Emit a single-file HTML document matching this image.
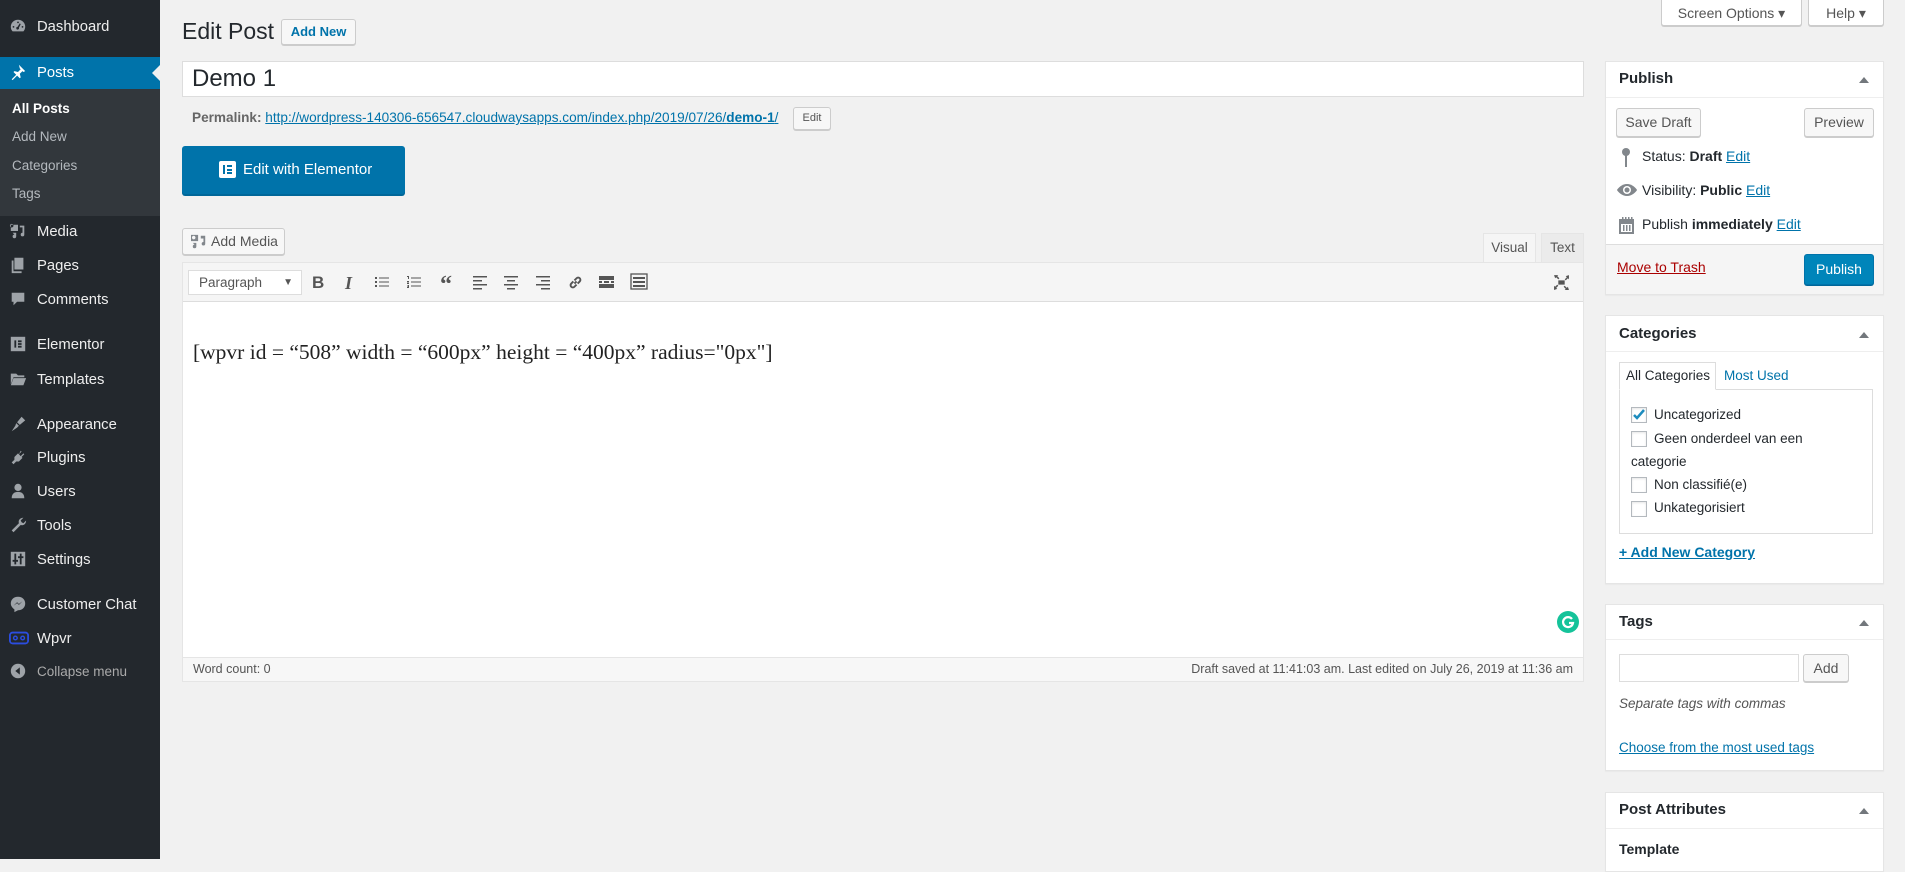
<!DOCTYPE html>
<html><head><meta charset="utf-8"><style>
*{box-sizing:border-box;margin:0;padding:0}
body{width:1905px;height:859px;background:#f1f1f1;font-family:"Liberation Sans",sans-serif;color:#23282d;position:relative;overflow:hidden;font-size:14px}
.a{position:absolute}
#sb{left:0;top:0;width:160px;height:859px;background:#23282d}
.mi{position:absolute;left:0;width:160px;color:#eee;font-size:14.8px;padding-left:37px;line-height:20px}
.mi svg{position:absolute;left:9px;top:0}
.sub{position:absolute;left:12px;color:#b4b9be;font-size:13.5px}
.btn{position:absolute;background:#f7f7f7;border:1px solid #ccc;border-radius:3px;box-shadow:0 1px 0 #ccc;color:#555;font-size:14px;text-align:center}
.box{position:absolute;left:1605px;width:279px;background:#fff;border:1px solid #e5e5e5;box-shadow:0 1px 1px rgba(0,0,0,.04)}
.bh{position:absolute;left:0;right:0;top:0;border-bottom:1px solid #eee;font-weight:bold;font-size:15px;padding-left:13px}
.tri{position:absolute;right:14px;width:0;height:0;border-left:5px solid transparent;border-right:5px solid transparent;border-bottom:6px solid #72777c}
a,.lk{color:#0073aa;text-decoration:underline}
.cb{position:absolute;width:16px;height:16px;border:1px solid #b4b9be;background:#fff;box-shadow:inset 0 1px 2px rgba(0,0,0,.1)}
.ti{position:absolute;top:273px;color:#555}
</style></head><body>
<div id="sb" class="a">
 <div class="a" style="left:0;top:57px;width:160px;height:32px;background:#0073aa"></div>
 <div class="a" style="left:152px;top:65px;border-top:8px solid transparent;border-bottom:8px solid transparent;border-right:8px solid #f1f1f1"></div>
 <div class="a" style="left:0;top:89px;width:160px;height:127px;background:#32373c"></div>
 <div class="mi" style="top:17px"><svg width="18" height="18" viewBox="0 0 20 20"><path fill="#9ea3a8" d="M10 3a8 8 0 0 0-8 8c0 2 .7 3.6 2 5h12a8 8 0 0 0 2-5 8 8 0 0 0-8-8zm0 2a1 1 0 1 1 0 2 1 1 0 0 1 0-2zM5 10a1 1 0 1 1 0 2 1 1 0 0 1 0-2zm10 0a1 1 0 1 1 0 2 1 1 0 0 1 0-2zm-3-3l1 1-2 4a1.5 1.5 0 1 1-1.5-1z"/></svg>Dashboard</div>
 <div class="mi" style="top:63px;color:#fff"><svg width="18" height="18" viewBox="0 0 20 20"><path fill="#fff" d="M11 2l7 7-2 1-1-1-3 3 1 4-1 1-3-3-5 5-1-1 5-5-3-3 1-1 4 1 3-3-1-1z"/></svg>Posts</div>
 <div class="sub" style="top:101px;color:#fff;font-weight:bold">All Posts</div>
 <div class="sub" style="top:129px">Add New</div>
 <div class="sub" style="top:158px">Categories</div>
 <div class="sub" style="top:186px">Tags</div>
 <div class="mi" style="top:222px"><svg width="18" height="18" viewBox="0 0 20 20"><path fill="#9ea3a8" d="M2 3h8v7H2zm3 1a2 2 0 1 0 0 .1zM12 4h5v10a2 2 0 1 1-2-2V6h-3zM4 12h4v4a2 2 0 1 1-2-2z"/></svg>Media</div>
 <div class="mi" style="top:256px"><svg width="18" height="18" viewBox="0 0 20 20"><path fill="#9ea3a8" d="M6 2h10v13H6zM3 5h2v12h9v2H3z"/></svg>Pages</div>
 <div class="mi" style="top:290px"><svg width="18" height="18" viewBox="0 0 20 20"><path fill="#9ea3a8" d="M3 3h14v10h-8l-4 4v-4H3z"/></svg>Comments</div>
 <div class="mi" style="top:335px"><svg width="18" height="18" viewBox="0 0 20 20"><rect x="2" y="2" width="16" height="16" fill="#9ea3a8"/><path fill="#23282d" d="M6 6h2v8H6zM10 6h4v2h-4zm0 3h4v2h-4zm0 3h4v2h-4z"/></svg>Elementor</div>
 <div class="mi" style="top:370px"><svg width="18" height="18" viewBox="0 0 20 20"><path fill="#9ea3a8" d="M2 4h6l2 2h7v2H5l-3 8zm3 5h14l-3 8H2z"/></svg>Templates</div>
 <div class="mi" style="top:415px"><svg width="18" height="18" viewBox="0 0 20 20"><path fill="#9ea3a8" d="M14 2l4 4-6 5-3-3zM8 9l3 3-2 2-6 4 4-6z"/></svg>Appearance</div>
 <div class="mi" style="top:448px"><svg width="18" height="18" viewBox="0 0 20 20"><path fill="#9ea3a8" d="M13 3l1 1-3 3 2 2 3-3 1 1-3 3 1 1-4 4H8l-3 3-2-2 3-3v-3l4-4 1 1z"/></svg>Plugins</div>
 <div class="mi" style="top:482px"><svg width="18" height="18" viewBox="0 0 20 20"><circle cx="10" cy="6" r="4" fill="#9ea3a8"/><path fill="#9ea3a8" d="M3 18c0-5 3-7 7-7s7 2 7 7z"/></svg>Users</div>
 <div class="mi" style="top:516px"><svg width="18" height="18" viewBox="0 0 20 20"><path fill="#9ea3a8" d="M16 2l-3 3 1 2 2 1 3-3c0 4-3 6-6 5l-8 8-2-2 8-8c-1-3 1-6 5-6z"/></svg>Tools</div>
 <div class="mi" style="top:550px"><svg width="18" height="18" viewBox="0 0 20 20"><rect x="2" y="2" width="16" height="16" fill="#9ea3a8"/><path fill="#23282d" d="M6 4h2v12H6zM12 4h2v12h-2zM4 11h6v2H4zm6-4h6v2h-6z"/></svg>Settings</div>
 <div class="mi" style="top:595px"><svg width="18" height="18" viewBox="0 0 20 20"><path fill="#9ea3a8" d="M10 2c5 0 8 3.5 8 7.5S15 17 10 17l-4 2v-3c-2-1.5-4-3.5-4-6.5C2 5.5 5 2 10 2z"/><path fill="#23282d" d="M5 12l4-4 2 2 4-3-4 4-2-2z"/></svg>Customer Chat</div>
 <div class="mi" style="top:629px"><svg width="20" height="18" viewBox="0 0 22 18"><rect x="1" y="3" width="20" height="12" rx="3" fill="none" stroke="#2b4de0" stroke-width="2"/><circle cx="7" cy="9" r="2" fill="none" stroke="#2b4de0" stroke-width="1.6"/><circle cx="15" cy="9" r="2" fill="none" stroke="#2b4de0" stroke-width="1.6"/></svg>Wpvr</div>
 <div class="mi" style="top:662px;color:#aaa;font-size:13.5px"><svg width="18" height="18" viewBox="0 0 20 20"><circle cx="10" cy="10" r="8" fill="#9ea3a8"/><path fill="#23282d" d="M12 6v8l-5-4z"/></svg>Collapse menu</div>
</div>

<!-- header -->
<div class="a" style="left:182px;top:18px;font-size:23px;color:#23282d">Edit Post</div>
<div class="btn" style="left:281px;top:19px;width:75px;height:26px;line-height:24px;color:#0073aa;font-weight:bold;font-size:13px;border-color:#ccc">Add New</div>
<div class="btn" style="left:1661px;top:-3px;width:141px;height:29px;line-height:30px;background:#fff;border-radius:0 0 3px 3px;color:#555">Screen Options ▾</div>
<div class="btn" style="left:1808px;top:-3px;width:76px;height:29px;line-height:30px;background:#fff;border-radius:0 0 3px 3px;color:#555">Help ▾</div>

<div class="a" style="left:182px;top:61px;width:1402px;height:36px;background:#fff;border:1px solid #ddd;font-size:24px;padding:4px 9px;line-height:26px">Demo 1</div>
<div class="a" style="left:192px;top:110px;font-size:13.6px;color:#666"><b>Permalink:</b> <a>http://wordpress-140306-656547.cloudwaysapps.com/index.php/2019/07/26/<b>demo-1</b>/</a></div>
<div class="btn" style="left:793px;top:107px;width:38px;height:23px;line-height:21px;font-size:11px">Edit</div>
<div class="a" style="left:182px;top:146px;width:223px;height:48px;background:#0073aa;border-radius:3px;box-shadow:0 2px 0 #006799;color:#fff;font-size:15px;line-height:48px;padding-left:61px"><span style="position:absolute;left:37px;top:15px;width:17px;height:17px;background:#fff;border-radius:2px"><span style="position:absolute;left:4px;top:4px;width:2px;height:9px;background:#0073aa"></span><span style="position:absolute;left:8px;top:4px;width:5px;height:2px;background:#0073aa"></span><span style="position:absolute;left:8px;top:7.5px;width:5px;height:2px;background:#0073aa"></span><span style="position:absolute;left:8px;top:11px;width:5px;height:2px;background:#0073aa"></span></span>Edit with Elementor</div>

<div class="btn" style="left:182px;top:228px;width:103px;height:27px;line-height:25px;font-size:14px;padding-left:22px"><svg class="a" style="left:7px;top:5px" width="18" height="16" viewBox="0 0 20 18"><path fill="#82878c" d="M1 1h8v7H1zm3 1a2 2 0 1 0 .1 0zM12 2h5v9a2 2 0 1 1-2-2V5h-3zM3 10h4v4a2 2 0 1 1-2-2z"/></svg>Add Media</div>

<!-- editor -->
<div class="a" style="left:1483px;top:233px;width:53px;height:30px;background:#f5f5f5;border:1px solid #e5e5e5;border-bottom:none;font-size:13.5px;color:#555;text-align:center;line-height:28px">Visual</div>
<div class="a" style="left:1541px;top:233px;width:43px;height:29px;background:#ebebeb;border:1px solid #e5e5e5;border-bottom:none;font-size:13.5px;color:#555;text-align:center;line-height:28px">Text</div>
<div class="a" style="left:182px;top:262px;width:1402px;height:420px;border:1px solid #e5e5e5;background:#fff"></div>
<div class="a" style="left:183px;top:263px;width:1400px;height:39px;background:#f5f5f5;border-bottom:1px solid #ddd"></div>
<div class="a" style="left:188px;top:270px;width:114px;height:25px;background:#fff;border:1px solid #ddd;font-size:13.5px;color:#555;line-height:23px;padding-left:10px">Paragraph<span style="position:absolute;right:8px;top:0;font-size:10px">▼</span></div>
<div class="ti" style="left:312px;font-weight:bold;font-size:17px">B</div>
<div class="ti" style="left:345px;font-style:italic;font-family:'Liberation Serif',serif;font-weight:bold;font-size:18px">I</div>
<svg class="a" style="left:374px;top:274px" width="16" height="16" viewBox="0 0 16 16"><path fill="#555" d="M1 3h2v2H1zm0 4h2v2H1zm0 4h2v2H1zM5 3.5h10v1H5zm0 4h10v1H5zm0 4h10v1H5z"/></svg>
<svg class="a" style="left:406px;top:274px" width="16" height="16" viewBox="0 0 16 16"><path fill="#555" d="M1 2h2v3H2V3H1zm0 5h2v1L2 9h1v1H1V9l1-1H1zm0 4h2v3H1v-1h1v-.5H1V12h1v-.5H1zM5 3.5h10v1H5zm0 4h10v1H5zm0 4h10v1H5z"/></svg>
<div class="ti" style="left:440px;font-weight:bold;font-size:24px;top:272px;font-family:'Liberation Serif',serif;line-height:26px">“</div>
<svg class="a" style="left:472px;top:274px" width="16" height="16" viewBox="0 0 16 16"><path fill="#555" d="M1 2h14v1.5H1zm0 4h9v1.5H1zm0 4h14v1.5H1zm0 4h9v1.5H1z"/></svg>
<svg class="a" style="left:503px;top:274px" width="16" height="16" viewBox="0 0 16 16"><path fill="#555" d="M1 2h14v1.5H1zm3 4h8v1.5H4zm-3 4h14v1.5H1zm3 4h8v1.5H4z"/></svg>
<svg class="a" style="left:535px;top:274px" width="16" height="16" viewBox="0 0 16 16"><path fill="#555" d="M1 2h14v1.5H1zm5 4h9v1.5H6zm-5 4h14v1.5H1zm5 4h9v1.5H6z"/></svg>
<svg class="a" style="left:567px;top:274px" width="17" height="17" viewBox="0 0 16 16"><path fill="none" stroke="#555" stroke-width="1.8" d="M7 9l2-2M6 7l-2 2a2 2 0 0 0 3 3l2-2M10 9l2-2a2 2 0 0 0-3-3L7 6"/></svg>
<svg class="a" style="left:598px;top:274px" width="17" height="16" viewBox="0 0 17 16"><path fill="#555" d="M1 2h15v4H1zm0 5h3v2H1zm5 0h5v2H6zm7 0h3v2h-3zm-12 3h15v4H1z"/></svg>
<svg class="a" style="left:630px;top:273px" width="18" height="17" viewBox="0 0 18 17"><rect x="1" y="1" width="16" height="15" fill="none" stroke="#555" stroke-width="1.3"/><path fill="#555" d="M3 4h12v2H3zm0 4h12v2H3zm0 4h12v2H3z"/></svg>
<svg class="a" style="left:1553px;top:274px" width="17" height="17" viewBox="0 0 16 16"><path fill="#555" d="M1 1h4L4 2l2 2-1 1-2-2-1 1zM15 1v4l-1-1-2 2-1-1 2-2-1-1zM1 15v-4l1 1 2-2 1 1-2 2 1 1zM15 15h-4l1-1-2-2 1-1 2 2 1-1zM5 6h6v4H5z"/></svg>
<div class="a" style="left:193px;top:340px;font-family:'Liberation Serif',serif;font-size:21.5px;color:#222">[wpvr id = “508” width = “600px” height = “400px” radius="0px"]</div>
<div class="a" style="left:1557px;top:611px;width:22px;height:22px;border-radius:50%;background:#15c39a"><svg width="22" height="22" viewBox="0 0 22 22"><path fill="none" stroke="#fff" stroke-width="2.2" d="M15 8a5 5 0 1 0 1 4h-4"/></svg></div>
<div class="a" style="left:183px;top:657px;width:1400px;height:24px;background:#f7f7f7;border-top:1px solid #e5e5e5;font-size:12.5px;color:#555;line-height:23px;padding:0 10px">Word count: 0<span style="float:right">Draft saved at 11:41:03 am. Last edited on July 26, 2019 at 11:36 am</span></div>

<!-- Publish box -->
<div class="box" style="top:61px;height:234px">
 <div class="bh" style="height:36px;line-height:34px">Publish</div><div class="tri" style="top:15px"></div>
 <div class="btn" style="left:10px;top:46px;width:85px;height:29px;line-height:27px">Save Draft</div>
 <div class="btn" style="left:198px;top:46px;width:70px;height:29px;line-height:27px">Preview</div>
 <svg class="a" style="left:14px;top:85px" width="12" height="22" viewBox="0 0 12 22"><circle cx="6" cy="5" r="4" fill="#82878c"/><rect x="5" y="7" width="2" height="13" fill="#82878c"/></svg>
 <div class="a" style="left:36px;top:86px;font-size:14px">Status: <b>Draft</b> <a>Edit</a></div>
 <svg class="a" style="left:10px;top:121px" width="22" height="14" viewBox="0 0 22 14"><path fill="#82878c" d="M11 1C6 1 2 5 1 7c1 2 5 6 10 6s9-4 10-6c-1-2-5-6-10-6z"/><circle cx="11" cy="7" r="4" fill="#fff"/><circle cx="11" cy="7" r="2.5" fill="#82878c"/></svg>
 <div class="a" style="left:36px;top:120px;font-size:14px">Visibility: <b>Public</b> <a>Edit</a></div>
 <svg class="a" style="left:12px;top:154px" width="17" height="18" viewBox="0 0 17 18"><path fill="#82878c" d="M1 3h15v15H1zm2 5v8h11V8z"/><path fill="#82878c" d="M4 1h1.5v4H4zm3 0h1.5v4H7zm3 0h1.5v4H10zm3 0h1.5v4H13zM5 9h1.5v6H5zm3 0h1.5v6H8zm3 0h1.5v6H11z"/></svg>
 <div class="a" style="left:36px;top:154px;font-size:14px">Publish <b>immediately</b> <a>Edit</a></div>
 <div class="a" style="left:0;right:0;top:182px;bottom:0;background:#f5f5f5;border-top:1px solid #ddd"></div>
 <div class="a" style="left:11px;top:197px;font-size:14px;color:#a00;text-decoration:underline">Move to Trash</div>
 <div class="a" style="left:198px;top:192px;width:70px;height:31px;background:#0085ba;border:1px solid #0073aa;border-radius:3px;box-shadow:0 1px 0 #006799;color:#fff;text-align:center;line-height:29px;font-size:14px">Publish</div>
</div>

<!-- Categories -->
<div class="box" style="top:315px;height:269px">
 <div class="bh" style="height:36px;line-height:36px">Categories</div><div class="tri" style="top:16px"></div>
 <div class="a" style="left:13px;top:46px;width:97px;height:28px;border:1px solid #ddd;border-bottom:1px solid #fff;background:#fff;z-index:2;font-size:13.5px;line-height:26px;padding-left:6px">All Categories</div>
 <div class="a" style="left:118px;top:52px;font-size:13.5px;color:#0073aa">Most Used</div>
 <div class="a" style="left:13px;top:73px;width:254px;height:145px;border:1px solid #ddd;background:#fff"></div>
 <div class="cb" style="left:25px;top:91px"><svg width="16" height="16" viewBox="0 0 16 16" style="position:absolute;left:-1px;top:-1px"><path fill="none" stroke="#1e8cbe" stroke-width="2.5" d="M3 8l3 3 7-8"/></svg></div>
 <div class="a" style="left:48px;top:91px;font-size:13.5px">Uncategorized</div>
 <div class="cb" style="left:25px;top:115px"></div>
 <div class="a" style="left:48px;top:115px;font-size:13.5px">Geen onderdeel van een</div>
 <div class="a" style="left:25px;top:138px;font-size:13.5px">categorie</div>
 <div class="cb" style="left:25px;top:161px"></div>
 <div class="a" style="left:48px;top:161px;font-size:13.5px">Non classifié(e)</div>
 <div class="cb" style="left:25px;top:185px"></div>
 <div class="a" style="left:48px;top:184px;font-size:13.5px">Unkategorisiert</div>
 <div class="a" style="left:13px;top:228px;font-size:14px;font-weight:bold"><a>+ Add New Category</a></div>
</div>

<!-- Tags -->
<div class="box" style="top:604px;height:167px">
 <div class="bh" style="height:35px;line-height:34px">Tags</div><div class="tri" style="top:15px"></div>
 <div class="a" style="left:13px;top:49px;width:180px;height:28px;border:1px solid #ddd;background:#fff"></div>
 <div class="btn" style="left:197px;top:49px;width:46px;height:28px;line-height:26px">Add</div>
 <div class="a" style="left:13px;top:91px;font-size:13.5px;font-style:italic;color:#555">Separate tags with commas</div>
 <div class="a" style="left:13px;top:135px;font-size:13.5px"><a>Choose from the most used tags</a></div>
</div>

<!-- Post Attributes -->
<div class="box" style="top:792px;height:80px">
 <div class="bh" style="height:36px;line-height:34px">Post Attributes</div><div class="tri" style="top:15px"></div>
 <div class="a" style="left:13px;top:48px;font-size:14px;font-weight:bold">Template</div>
</div>
</body></html>
